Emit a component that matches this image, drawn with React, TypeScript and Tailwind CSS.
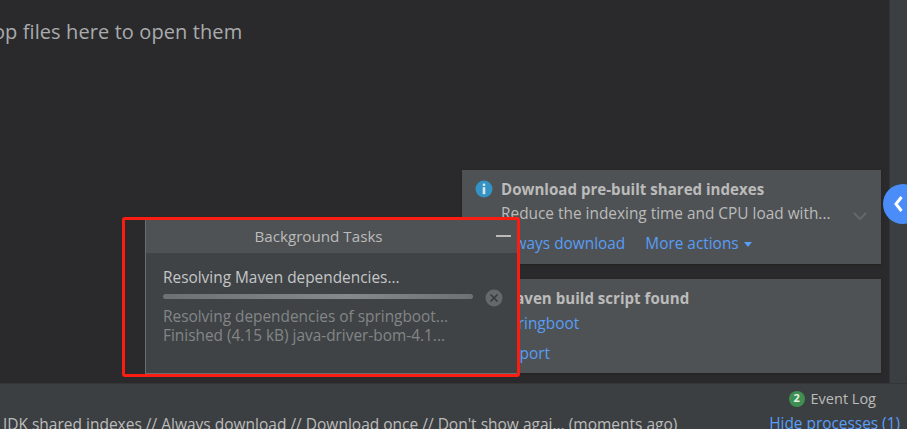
import React from "react";

const font = { fontFamily: '"Open Sans", "Noto Sans", sans-serif' };

function Main() {
  return (
    <div className="relative flex-1 bg-[#2a2a2c] pt-[18px]">
      <div className="text-[20px] leading-[28px] text-[#a9abad] ml-[-30px] whitespace-nowrap tracking-[0.1px]">Drop files here to open them</div>

      {/* Notifications */}
      <div className="absolute left-[462px] top-[170px] w-[419px] h-[94px] bg-[#4f5254] pl-[39px] pt-[8px] shadow-[0_1px_2px_#222]">
        <svg className="absolute left-[13px] top-[10px]" width="18" height="18" viewBox="0 0 18 18">
          <circle cx="9" cy="9" r="8.5" fill="#3592c4" />
          <rect x="7.7" y="3.5" width="2.6" height="2.6" rx="1" fill="#d8e6ee" />
          <rect x="7.7" y="7.2" width="2.6" height="7" fill="#d8e6ee" />
        </svg>
        <div className="text-[15.1px] leading-[22px] font-bold text-[#bbbbbb] whitespace-nowrap">Download pre-built shared indexes</div>
        <div className="mt-[3px] text-[15.4px] leading-[22px] text-[#bbbbbb] whitespace-nowrap">Reduce the indexing time and CPU load with...</div>
        <div className="mt-[8px] flex items-center gap-[20px] text-[15.4px] leading-[22px] text-[#589df6] whitespace-nowrap">
          <span>Always download</span>
          <span className="flex items-center gap-[5px]">More actions
            <svg width="8" height="5" viewBox="0 0 8 5"><path d="M0 0h8L4 5z" fill="#589df6" /></svg>
          </span>
        </div>
        <svg className="absolute left-[390px] top-[41px]" width="16" height="10" viewBox="0 0 16 10">
          <path d="M2 2l6 6 6-6" fill="none" stroke="#65686a" strokeWidth="2" />
        </svg>
      </div>
      <div className="absolute left-[462px] top-[279px] w-[419px] h-[94px] bg-[#4f5254] pl-[39px] pt-[8px] shadow-[0_1px_2px_#222]">
        <div className="text-[15.1px] leading-[22px] font-bold text-[#bbbbbb] whitespace-nowrap">Maven build script found</div>
        <div className="mt-[4px] text-[15.4px] leading-[22px] text-[#589df6] whitespace-nowrap">springboot</div>
        <div className="mt-[8px] text-[15.4px] leading-[22px] text-[#589df6] whitespace-nowrap">Import</div>
      </div>

      {/* Background Tasks */}
      <div className="absolute left-[122px] top-[217px] w-[398px] h-[160px] border-[3px] border-[#fb1c12] rounded-[3px] pl-[20px] bg-[#2a2a2c]">
        <div className="h-full bg-[#3f4345] border-l border-b border-[#6b6e70] flex flex-col">
          <div className="relative h-[33px] shrink-0 bg-[#4f5254] flex items-center justify-center pr-[26px] text-[15.2px] text-[#bbbbbb]">
            Background Tasks
            <span className="absolute left-[350px] top-[15px] w-[15px] h-[2px] bg-[#bbbbbb]" />
          </div>
          <div className="relative pl-[17px] pt-[14px]">
            <div className="text-[15.4px] leading-[22px] text-[#c4c6c8] whitespace-nowrap">Resolving Maven dependencies...</div>
            <div className="mt-[5px] w-[310px] h-[5px] rounded-full bg-[linear-gradient(90deg,#6d7173,#85898b_60%,#6d7173)]" />
            <div className="mt-[8px] text-[15.4px] leading-[19px] text-[#838688] whitespace-nowrap">Resolving dependencies of springboot...</div>
            <div className="text-[15.4px] leading-[19px] text-[#838688] whitespace-nowrap">Finished (4.15 kB) java-driver-bom-4.1...</div>
            <svg className="absolute left-[339px] top-[36px]" width="18" height="18" viewBox="0 0 18 18">
              <circle cx="9" cy="9" r="8.5" fill="#65686a" />
              <path d="M5.5 5.5l7 7M12.5 5.5l-7 7" stroke="#36383a" strokeWidth="1.5" />
            </svg>
          </div>
        </div>
      </div>
    </div>
  );
}

export default function App() {
  return (
    <div className="relative w-[907px] h-[429px] overflow-hidden flex flex-col bg-[#3c3f41]" style={font}>
      <div className="flex h-[384px]">
        <Main />
        <div className="w-[18px] bg-[#3c3f41] border-l border-[#323436]" />
      </div>
      <div className="flex-1 border-t border-[#333537] bg-[#3c3f41] relative text-[15.5px] text-[#bbbbbb]">
        <div className="flex justify-end items-center h-[29px] pr-[31px] gap-[6px]">
          <span className="w-[16px] h-[16px] rounded-full bg-[#3f8f52] text-[11px] font-bold text-[#e6efe8] flex items-center justify-center">2</span>
          <span className="text-[14.5px]">Event Log</span>
        </div>
        <div className="flex justify-between h-[16px] pl-[3px] pr-[7px] leading-[22px] whitespace-nowrap">
          <span>JDK shared indexes // Always download // Download once // Don't show agai... (moments ago)</span>
          <span className="text-[15.4px] text-[#589df6]">Hide processes (1)</span>
        </div>
      </div>
      <div className="absolute left-[883px] top-[184px] w-[40px] h-[40px] rounded-full bg-[#4a8df8] flex items-center pl-[9px]">
        <svg width="12" height="20" viewBox="0 0 12 20"><path d="M9.5 3L4 10l5.5 7" fill="none" stroke="#ffffff" strokeWidth="3" /></svg>
      </div>
    </div>
  );
}
